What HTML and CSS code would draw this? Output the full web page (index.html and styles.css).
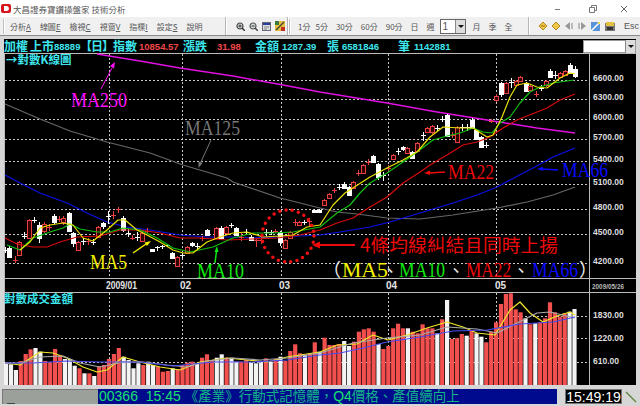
FILE: index.html
```html
<!DOCTYPE html>
<html lang="zh-Hant">
<head>
<meta charset="utf-8">
<title>技術分析</title>
<link rel="stylesheet" href="styles.css">
</head>
<body>
<div class="app">
  <header class="titlebar">
    <svg class="logo" width="10" height="9" viewBox="0 0 10 9"><rect width="10" height="9" rx="2" fill="#d8141c"/><path d="M3 2h2.400a2.500 2.500 0 0 1 0 5H3z" fill="#fff"/></svg>
    <span class="title">大昌證券寶鑽操盤家 技術分析</span>
    <div class="winctl">
      <svg width="80" height="10" viewBox="0 0 80 10"><path d="M5 5.500h5" stroke="#777"/><path d="M39.500 3.500h5v5h-5zM41.500 3.500v-2h5v5h-2" fill="none" stroke="#777"/><path d="M71 2l6 6M77 2l-6 6" stroke="#666"/></svg>
    </div>
  </header>

  <nav class="toolbar">
    <i class="grip"></i>
    <div class="menu">
      <span>分析<u>A</u></span><span>線圖<u>E</u></span><span>檢視<u>C</u></span><span>視窗<u>V</u></span><span>指標<u>I</u></span><span>設定<u>S</u></span><span>說明</span>
    </div>
    <i class="sep"></i>
    <div class="icons">
      <svg width="9" height="9" viewBox="0 0 9 9"><circle cx="4" cy="4" r="3" fill="#cfd8d8" stroke="#444" stroke-width="1.200"/><path d="M6 6l3 3" stroke="#333" stroke-width="1.500"/><path d="M2.500 4h3M4 2.500v3" stroke="#333"/></svg>
      <svg width="9" height="9" viewBox="0 0 9 9"><circle cx="4" cy="4" r="3" fill="#cfd8d8" stroke="#555" stroke-width="1.200"/><path d="M6 6l3 3" stroke="#444" stroke-width="1.500"/><path d="M2.500 4h3" stroke="#333"/></svg>
      <svg width="9" height="9" viewBox="0 0 9 9"><rect x=".5" y=".5" width="8" height="8" fill="#ddd" stroke="#667"/><path d="M1 2h7" stroke="#2a3f9a" stroke-width="2"/><path d="M2 5h5M2 7h3" stroke="#888"/></svg>
      <svg width="10" height="10" viewBox="0 0 10 10"><rect width="10" height="10" fill="#e8c040"/><path d="M0 0h4v4H0z" fill="#3a7a3a"/><path d="M6 6h4v4H6z" fill="#c03020"/><path d="M1 9l8-8" stroke="#443" stroke-width="1.500"/></svg>
    </div>
    <i class="sep"></i>
    <i class="grip"></i>
    <div class="periods">
      <span class="first">1分</span><span>5分</span><span>30分</span><span>60分</span><span>90分</span><span>日</span><span>週</span>
      <div class="spin"><b>1</b><em class="drop"></em></div>
      <span>月</span><span>季</span><span>全</span>
    </div>
    <i class="sep"></i>
    <div class="icons nav">
      <svg width="8" height="8" viewBox="0 0 8 8"><path d="M4 0l4 4-4 4-4-4z" fill="#f0c848" stroke="#b08a20"/><path d="M2 4h4" stroke="#a06a10"/></svg>
      <svg width="8" height="8" viewBox="0 0 8 8"><path d="M4 0l4 4-4 4-4-4z" fill="#f0c848" stroke="#b08a20"/></svg>
      <svg width="8" height="8" viewBox="0 0 8 8"><path d="M5 0v8L0 4z" fill="#999"/><path d="M6 1h2v6H6z" fill="#bbb"/></svg>
      <svg width="8" height="8" viewBox="0 0 8 8"><path d="M3 0v8l5-4z" fill="#999"/><path d="M0 1h2v6H0z" fill="#bbb"/></svg>
      <svg width="9" height="9" viewBox="0 0 9 9"><rect width="9" height="9" fill="#5a93d8"/><path d="M0 9l8-8" stroke="#fff" stroke-width="1.500"/><path d="M7 0h2v2H7z" fill="#f4e04a"/></svg>
      <svg width="10" height="9" viewBox="0 0 10 9"><rect y="1" width="10" height="8" fill="#777"/><path d="M1 0h8v4H1z" fill="#e8c040"/><rect x="2" y="5" width="6" height="3" fill="#333"/></svg>
      <span class="esc">Esc</span>
    </div>
  </nav>

  <main class="terminal">
    <section class="info">
      <b>加權</b><b>上市</b><span class="code">88889</span><b class="bracket">【日】</b><b>指數</b><span class="num red">10854.57</span>
      <b>漲跌</b><span class="num red">31.98</span><b>金額</b><span class="num">1287.39</span>
      <b>張</b><span class="num">6581846</span><b>筆</b><span class="num">1142881</span>
      <div class="combo"><em class="drop"></em></div>
    </section>

    <svg id="chart" class="chart" width="632" height="332" viewBox="4 53 632 332">
      <path class="rule" d="M4 53.500H636M4.500 53V385M589.500 53V385M4 278.500H636M4 292.500H636"/>
      <path class="grid" d="M5 80.500H589M5 99.500H589M5 119.500H589M5 139.500H589M5 161.500H589M5 184.500H589M5 209.500H589M5 234.500H589M5 263.500H589M5 316.500H589M5 338.500H589M5 362.500H589"/>
      <path class="grid" d="M109.500 54V278M182.500 54V278M281.500 54V278M388.500 54V278M496.500 54V278M109.500 293V385M182.500 293V360M281.500 293V385M388.500 293V385M496.500 293V385"/>

      <g id="volume"></g>
      <polyline class="ln vy" points="5,363 20,365 40,352 53,353 67,358 83,367 97,372 107,370 123,357 140,362 160,367 180,370 200,362 227,358 247,360 267,362 287,357 320,352 337,345 357,344 373,335 388,340 407,335 427,328 447,322 463,327 477,333 495,335 510,310 520,302 530,313 543,322 557,316 570,312 575,315"/>
      <polyline class="ln vg" points="5,363 20,363 40,357 63,356 80,363 100,367 123,362 143,362 167,365 187,367 207,361 233,358 260,360 287,358 320,353 353,343 387,338 420,335 447,327 477,329 497,333 517,323 537,313 550,312 575,318"/>
      <polyline class="ln vb" points="5,363 33,363 67,361 100,362 140,362 173,366 213,362 253,362 287,360 320,355 340,353 363,348 387,342 420,337 453,331 487,330 520,324 553,322 575,317"/>

      <polyline class="ln m250" points="97,54 140,61 180,68 233,76 283,85 320,92 387,103 437,112 487,120 537,128 575,133"/>
      <polyline class="ln m125" points="5,104 40,119 70,131 107,142 150,153 183,165 227,178 233,182 280,198 320,208 337,212 357,214 387,218 420,219 453,215 497,208 527,202 553,195 575,187"/>
      <polyline class="ln m66" points="5,175 20,183 40,193 67,203 87,213 107,222 127,227 150,230 180,235 207,237 233,237 253,238 280,237 320,235 340,232 370,227 390,222 400,219 420,213 453,203 477,195 497,187 510,180 533,168 553,157 575,148"/>
      <g id="candles"></g>
      <polyline class="ln m22" points="5,238 17,244 33,247 47,247 60,242 77,237 100,236 120,230 140,230 160,233 180,238 200,238 227,240 253,239 277,238 300,235 320,230 337,223 353,218 370,207 387,197 403,183 420,172 430,165 447,155 463,145 477,142 490,137 503,128 517,120 527,116 547,108 560,100 575,94"/>
      <polyline class="ln m10" points="7,245 20,250 33,238 50,232 63,228 70,224 80,229 97,232 110,232 123,228 140,230 157,238 173,248 190,252 213,247 233,238 253,233 273,233 293,232 320,227 337,213 350,205 360,193 370,183 387,173 403,162 417,152 433,140 447,136 460,133 473,128 483,132 492,133 500,123 510,117 520,103 530,92 540,87 553,83 567,81 574,80"/>
      <polyline class="ln m5" points="20,250 30,242 40,228 50,225 63,223 73,225 83,238 93,241 107,230 118,220 125,220 137,230 147,235 160,242 173,250 183,253 193,253 207,242 220,237 233,233 247,232 263,237 280,236 293,235 307,227 320,225 333,205 345,193 370,177 387,168 403,160 417,152 430,137 443,127 460,128 473,128 487,137 493,135 502,117 510,97 517,85 527,83 537,87 547,88 560,78 570,73 575,74"/>

      <g class="notes">
        <text class="note magenta" x="71" y="107" textLength="56" lengthAdjust="spacingAndGlyphs">MA250</text>
        <text class="note gray" x="185" y="135" textLength="55" lengthAdjust="spacingAndGlyphs">MA125</text>
        <text class="note yellow" x="90" y="269" textLength="37" lengthAdjust="spacingAndGlyphs">MA5</text>
        <text class="note green" x="197" y="278" textLength="47" lengthAdjust="spacingAndGlyphs">MA10</text>
        <text class="note red" x="448" y="179" textLength="46" lengthAdjust="spacingAndGlyphs">MA22</text>
        <text class="note blue" x="562" y="177" textLength="46" lengthAdjust="spacingAndGlyphs">MA66</text>
        <text class="cjk red" x="360" y="252" textLength="198" lengthAdjust="spacingAndGlyphs">4條均線糾結且同時上揚</text>
        <text class="cjk white" x="323" y="276">（</text>
        <text class="note yellow" x="342" y="277" textLength="46" lengthAdjust="spacingAndGlyphs">MA5</text>
        <text class="cjk white" x="381" y="277">、</text>
        <text class="note green" x="399" y="277" textLength="46" lengthAdjust="spacingAndGlyphs">MA10</text>
        <text class="cjk white" x="447" y="277">、</text>
        <text class="note red" x="466" y="277" textLength="45" lengthAdjust="spacingAndGlyphs">MA22</text>
        <text class="cjk white" x="512" y="277">、</text>
        <text class="note blue" x="532" y="277" textLength="46" lengthAdjust="spacingAndGlyphs">MA66</text>
        <text class="cjk white" x="579" y="276">）</text>
      </g>
      <g class="arrows">
        <path class="a-m" d="M101 89L112 68"/><path class="h-m" d="M115 62l-5 4 4 2.500z"/>
        <path class="a-g" d="M211 140L200 164"/><path class="h-g" d="M198.500 168l4-5-4-1.500z"/>
        <path class="a-y" d="M133 253L146 244"/><path class="h-y" d="M151 241l-6.500 1.500 2.500 3.500z"/>
        <path class="a-n" d="M215 263L216.500 251"/><path class="h-n" d="M217 246l-2.500 6h4z"/>
        <path class="a-r" d="M445 172L429 173"/><path class="h-r" d="M424 173l6-2.500v4.500z"/>
        <path class="a-b" d="M558 170L542 169"/><path class="h-b" d="M537 169l6-2.500v4.500z"/>
        <path class="a-r2" d="M355 245L318 245"/><path class="h-r" d="M312 245l8-3.500v7z"/>
        <circle class="ring" cx="288" cy="236" r="26"/>
      </g>

      <text class="panel" x="6" y="64">→對數K線圖</text>
      <text class="panel" x="4" y="303">對數成交金額</text>

      <g class="axis">
        <text x="593" y="81">6600.00</text><text x="593" y="100">6300.00</text><text x="593" y="120">6000.00</text>
        <text x="593" y="140">5700.00</text><text x="593" y="162">5400.00</text><text x="593" y="185">5100.00</text>
        <text x="593" y="210">4800.00</text><text x="593" y="235">4500.00</text><text x="593" y="264">4200.00</text>
        <text x="593" y="318">1830.00</text><text x="593" y="341">1220.00</text><text x="593" y="364">610.00</text>
        <text class="dt" x="106" y="289" textLength="31" lengthAdjust="spacingAndGlyphs">2009/01</text>
        <text class="dt" x="180" y="289">02</text><text class="dt" x="279" y="289">03</text>
        <text class="dt" x="386" y="289">04</text><text class="dt" x="495" y="289">05</text>
        <text class="stamp" x="592" y="289" textLength="32" lengthAdjust="spacingAndGlyphs">2009/05/26</text>
      </g>
    </svg>
  </main>

  <footer class="status">
    <div class="slot"><i></i></div>
    <div class="ticker">00366&nbsp; 15:45 <span class="cn">《產業》行動式記憶體，</span>Q4<span class="cn">價格、產值續向上</span></div>
    <div class="clock">15:49:19</div>
    <svg class="sig" width="12" height="12" viewBox="0 0 12 12"><path d="M1 1l10 10" stroke="#5f7f3a" stroke-width="1.200"/></svg>
  </footer>
</div>
<script src="chart.js"></script>
</body>
</html>
```
FILE: styles.css
```css
* { box-sizing: border-box; }
html, body { margin: 0; padding: 0; }
body { width: 640px; height: 406px; overflow: hidden; background: #d6d6d6; font-family: "Liberation Sans", "Noto Sans CJK TC", sans-serif; }
.app { display: flex; flex-direction: column; width: 640px; height: 406px; }

.titlebar { display: flex; align-items: center; height: 17px; background: #fff; padding-left: 1px; color: #555; font-size: 9px; flex: none; }
.logo { margin-right: 2px; }
.title { font-family: "Noto Sans CJK TC", sans-serif; font-size: 8.500px; }
.winctl { margin-left: auto; display: flex; padding-right: 10px; }

.toolbar { display: flex; align-items: center; height: 19px; background: #f0f0f0; border-bottom: 1px solid #8a8a8a; color: #555; font-size: 8px; flex: none; padding-left: 3px; }
.grip { width: 2px; height: 15px; background: #bdbdbd; border-right: 1px solid #fff; flex: none; }
.sep { width: 2px; height: 18px; background: #b5b5b5; border-right: 1px solid #fff; flex: none; }
.menu { display: flex; gap: 9px; width: 220px; padding-left: 5px; }
.toolbar span { white-space: nowrap; font-family: "Noto Sans CJK TC", sans-serif; }
.icons { display: flex; align-items: center; gap: 4px; width: 60px; padding-left: 9px; }
.periods { display: flex; align-items: center; gap: 8px; width: 237px; padding-left: 7px; }
.periods .first { margin-right: -3px; }
.spin { display: flex; align-items: center; justify-content: space-between; width: 26px; height: 15px; background: #fff; border: 1px solid #666; margin: 0 -1px 0 -3px; font-size: 10px; padding-left: 2px; }
.spin b { font-weight: normal; }
.drop { display: block; position: relative; width: 10px; height: 13px; background: #ddd; border-left: 1px solid #888; }
.drop::after { content: ""; position: absolute; left: 2px; top: 5px; border: 3px solid transparent; border-top-color: #111; }
.icons.nav { width: auto; gap: 5px; padding-left: 9px; }
.icons.nav svg { flex: none; }
.esc { font-family: "Liberation Sans", sans-serif !important; font-size: 9px; margin-left: 4px; }

.terminal { margin: 3px 4px 0; background: #000; height: 346px; flex: none; width: 632px; }
.info { display: grid; grid-template-columns: 26px 24px 26px 33px 26px 44px 34px 38px 27px 45px 15px 56px 16px 169px 53px; align-items: center; height: 14px; background: #000; color: #3fe6ee; white-space: nowrap; }
.info b { font: bold 12px "Noto Sans CJK TC", sans-serif; line-height: 14px; }
.info .bracket { letter-spacing: -1px; }
.code, .num { font: bold 9.500px "Liberation Sans", sans-serif; }
.num.red { color: #f04848; }
.combo { display: flex; justify-content: flex-end; align-items: center; height: 13px; background: #fff; border: 1px solid #999; margin-top: 1px; }
.chart { display: block; }

.rule { stroke: #bbb; fill: none; stroke-width: 1; }
.grid { stroke: #c8c8c8; fill: none; stroke-width: 1; stroke-dasharray: 2 2; }
.ln { fill: none; stroke-width: 1.200; stroke-linejoin: round; }
.m5 { stroke: #e8e000; }
.m10 { stroke: #10c010; }
.m22 { stroke: #d80a0a; }
.m66 { stroke: #0a10e8; }
.m125 { stroke: #666; }
.m250 { stroke: #e010e0; stroke-width: 1.500; }
.vy { stroke: #f2e82a; }
.vg { stroke: #a8a8a8; }
.vb { stroke: #4a4af0; }

.note { font-family: "Liberation Serif", serif; font-size: 21px; }
.cjk { font-family: "Noto Sans CJK TC", sans-serif; font-size: 18px; }
.magenta { fill: #ff10ff; }
.gray { fill: #777; }
.yellow { fill: #f4f000; }
.green { fill: #10e810; }
.red { fill: #ee0a0a; }
.blue { fill: #0a0aff; }
.white { fill: #eee; }

.a-m { stroke: #ff10ff; } .h-m { fill: #ff10ff; }
.a-g { stroke: #777; } .h-g { fill: #777; }
.a-y { stroke: #f4f000; stroke-width: 1.500; } .h-y { fill: #f4f000; }
.a-n { stroke: #10e810; stroke-width: 1.500; } .h-n { fill: #10e810; }
.a-r { stroke: #ee0a0a; stroke-width: 1.500; } .h-r { fill: #ee0a0a; }
.a-b { stroke: #0a0aff; stroke-width: 1.500; } .h-b { fill: #0a0aff; }
.a-r2 { stroke: #ee0a0a; stroke-width: 2; }
.ring { fill: none; stroke: #f01010; stroke-width: 3.500; stroke-linecap: round; stroke-dasharray: 0 6.300; }

.panel { font: bold 11.500px "Noto Sans CJK TC", sans-serif; fill: #3fe6ee; }
.axis text { font: bold 8.500px "Liberation Sans", sans-serif; fill: #ddd; }
.axis .dt { font-size: 10px; fill: #e4e4e4; }
.axis .stamp { font-size: 8px; fill: #bbb; }

.wick { stroke: #fff; stroke-width: 1; }
.wick-r { stroke: #e84040; stroke-width: 1; }
.body-w { fill: #fff; }
.body-r { fill: #300; stroke: #e84040; stroke-width: 1; }
.bar-w { fill: #f4f4f4; }
.bar-r { fill: #f24f4f; }

.status { display: flex; align-items: stretch; height: 15px; margin-top: 4px; flex: none; }
.slot { position: relative; width: 96px; margin-left: 2px; background: #9ba09b; border: 1px solid #777; border-width: 1px 0 0 1px; }
.slot i { position: absolute; left: 4px; bottom: 0; width: 8px; height: 1px; background: #444; }
.ticker { width: 459px; background: #000a8c; color: #18e070; font: 14px/15px "Liberation Sans", "Noto Sans CJK TC", sans-serif; white-space: nowrap; overflow: hidden; padding-left: 1px; }
.ticker .cn { font-size: 13.500px; color: #12b488; }
.clock { width: 57px; margin-left: 8px; background: #000; color: #fff; font: 14px/15px "Liberation Sans", sans-serif; border: 1px solid #777; text-align: center; }
.sig { margin: 2px 0 0 3px; }
```
FILE: chart.js
```js
// Volume tops (zoomed reference units), negative = up/white bar.
var vols = [-232,-238,-255,228,207,193,-189,-200,228,232,192,210,-222,-222,-242,250,-265,265,-273,243,240,222,207,189,-215,-225,-250,-235,240,-230,-240,245,260,258,-250,252,240,233,230,-237,218,208,225,-218,-208,218,-218,-230,230,225,-232,-235,-232,220,-230,222,-215,228,198,178,205,-210,205,172,-200,
158,180,180,177,-168,-183,170,140,133,130,140,-177,192,183,130,116,130,-130,140,145,118,130,130,-145,103,-45,162,160,147,-152,135,-145,-155,172,140,112,57,27,25,73,82,-100,118,-115,112,100,52,82,95,85,-80,-72];

// x, top, bottom, wick top, wick bottom, colour
var candles = [
[5,250,250,247,253,'w'],[9,248,257,246,258,'w'],[15,260,260,256,263,'r'],[19,242,255,241,256,'r'],[24,236,236,232,239,'w'],[29,220,238,219,239,'r'],[34,220,220,217,223,'w'],[39,225,238,222,243,'w'],[44,224,231,222,233,'r'],[49,227,227,224,231,'r'],[54,216,222,214,224,'w'],[59,219,219,216,222,'r'],[63,218,222,216,225,'r'],[69,213,231,212,232,'w'],[73,233,243,232,247,'w'],[78,242,250,241,251,'r'],[83,241,241,238,245,'w'],[88,241,241,238,245,'r'],[93,242,242,239,245,'w'],[98,227,237,226,238,'r'],[103,223,226,222,229,'w'],[108,216,216,211,224,'w'],[113,215,215,211,219,'r'],[118,209,209,207,213,'r'],[123,218,230,216,232,'w'],[128,233,233,229,237,'w'],[132,238,238,235,240,'r'],[137,237,237,232,241,'w'],[142,233,241,231,242,'r'],[147,231,231,228,234,'r'],[152,249,251,249,252,'w'],[157,247,247,246,251,'w'],[162,246,246,245,249,'w'],[167,245,245,244,247,'w'],[172,253,258,252,259,'w'],[177,257,266,256,267,'r'],[182,255,255,253,258,'w'],[187,247,253,246,254,'r'],[192,243,245,242,247,'w'],[197,246,246,243,249,'w'],[202,238,238,236,241,'r'],[207,230,235,229,236,'w'],[216,228,238,227,239,'r'],[221,228,238,226,239,'w'],[226,227,233,226,234,'r'],[231,225,225,223,228,'w'],[236,228,235,227,236,'w'],[241,237,237,233,241,'r'],[246,232,232,229,235,'w'],[251,237,240,235,241,'w'],[256,240,240,238,247,'r'],[261,240,240,237,244,'r'],[266,232,232,229,236,'w'],[271,232,232,230,235,'w'],[275,231,231,229,233,'r'],[280,232,242,231,246,'w'],[285,240,248,239,249,'r'],[290,232,238,231,239,'r'],[295,222,222,219,226,'r'],[299,222,225,221,226,'r'],[304,222,222,220,225,'w'],[309,221,221,218,226,'r'],[314,210,212,209,213,'w'],[319,210,212,209,213,'w'],
[324,200,205,199,206,'r'],[329,194,198,193,199,'r'],[334,190,190,188,193,'r'],[339,187,187,184,190,'w'],[344,184,188,182,189,'w'],[349,187,195,186,196,'w'],[353,182,188,181,189,'r'],[358,173,173,170,176,'r'],[363,165,173,164,174,'r'],[368,162,162,159,165,'r'],[373,156,162,155,163,'w'],[378,164,177,163,180,'w'],[383,175,175,172,181,'w'],[388,168,168,165,172,'r'],[393,155,159,154,160,'r'],[398,151,151,148,155,'w'],[403,147,149,146,151,'w'],[407,148,153,147,154,'r'],[412,152,158,151,159,'w'],[417,143,151,142,152,'r'],[423,135,135,132,141,'w'],[427,128,132,127,133,'r'],[432,126,132,125,134,'r'],[437,128,128,125,131,'w'],[442,119,119,116,122,'w'],[447,115,136,114,137,'w'],[452,135,135,132,138,'r'],[457,127,142,126,143,'r'],[462,127,127,124,131,'w'],[467,127,127,124,131,'w'],[472,120,128,118,129,'w'],[476,130,139,129,140,'w'],[481,137,147,136,148,'w'],[486,145,145,142,148,'w'],[491,121,121,119,123,'r'],[496,96,100,94,102,'r'],[501,83,94,82,97,'w'],[506,83,93,82,94,'r'],[511,82,82,78,88,'w'],[516,81,85,80,86,'r'],[520,77,81,76,82,'r'],[526,83,91,82,92,'w'],[530,86,90,85,91,'r'],[536,94,94,91,97,'r'],[541,88,88,85,91,'w'],[546,81,85,80,87,'r'],[550,71,77,69,78,'w'],[555,75,75,71,79,'w'],[560,73,77,72,78,'r'],[565,71,75,70,76,'r'],[570,65,73,63,74,'w'],[575,69,76,66,78,'w']
];

var NS = 'http://www.w3.org/2000/svg';
function add(parent, tag, attrs) {
  var el = document.createElementNS(NS, tag);
  for (var k in attrs) el.setAttribute(k, attrs[k]);
  parent.appendChild(el);
}

var vg = document.getElementById('volume');
vols.forEach(function (v, i) {
  var top = 285 + Math.abs(v) / 3;
  add(vg, 'rect', { x: (4 + i * 4.9).toFixed(1), y: top.toFixed(1), width: 4.2, height: (385 - top).toFixed(1), 'class': v < 0 ? 'bar-w' : 'bar-r' });
});

var cg = document.getElementById('candles');
candles.forEach(function (c) {
  var x = c[0], t = c[1], b = c[2], red = c[5] === 'r';
  add(cg, 'path', { d: 'M' + (x + .5) + ' ' + c[3] + 'V' + c[4], 'class': red ? 'wick-r' : 'wick' });
  if (b - t < 1) {
    add(cg, 'path', { d: 'M' + (x - 2) + ' ' + (t + .5) + 'h5', 'class': red ? 'wick-r' : 'wick' });
  } else {
    add(cg, 'rect', red
      ? { x: x - 1.5, y: t + .5, width: 4, height: b - t, 'class': 'body-r' }
      : { x: x - 2, y: t, width: 5, height: b - t + 1, 'class': 'body-w' });
  }
});
```
